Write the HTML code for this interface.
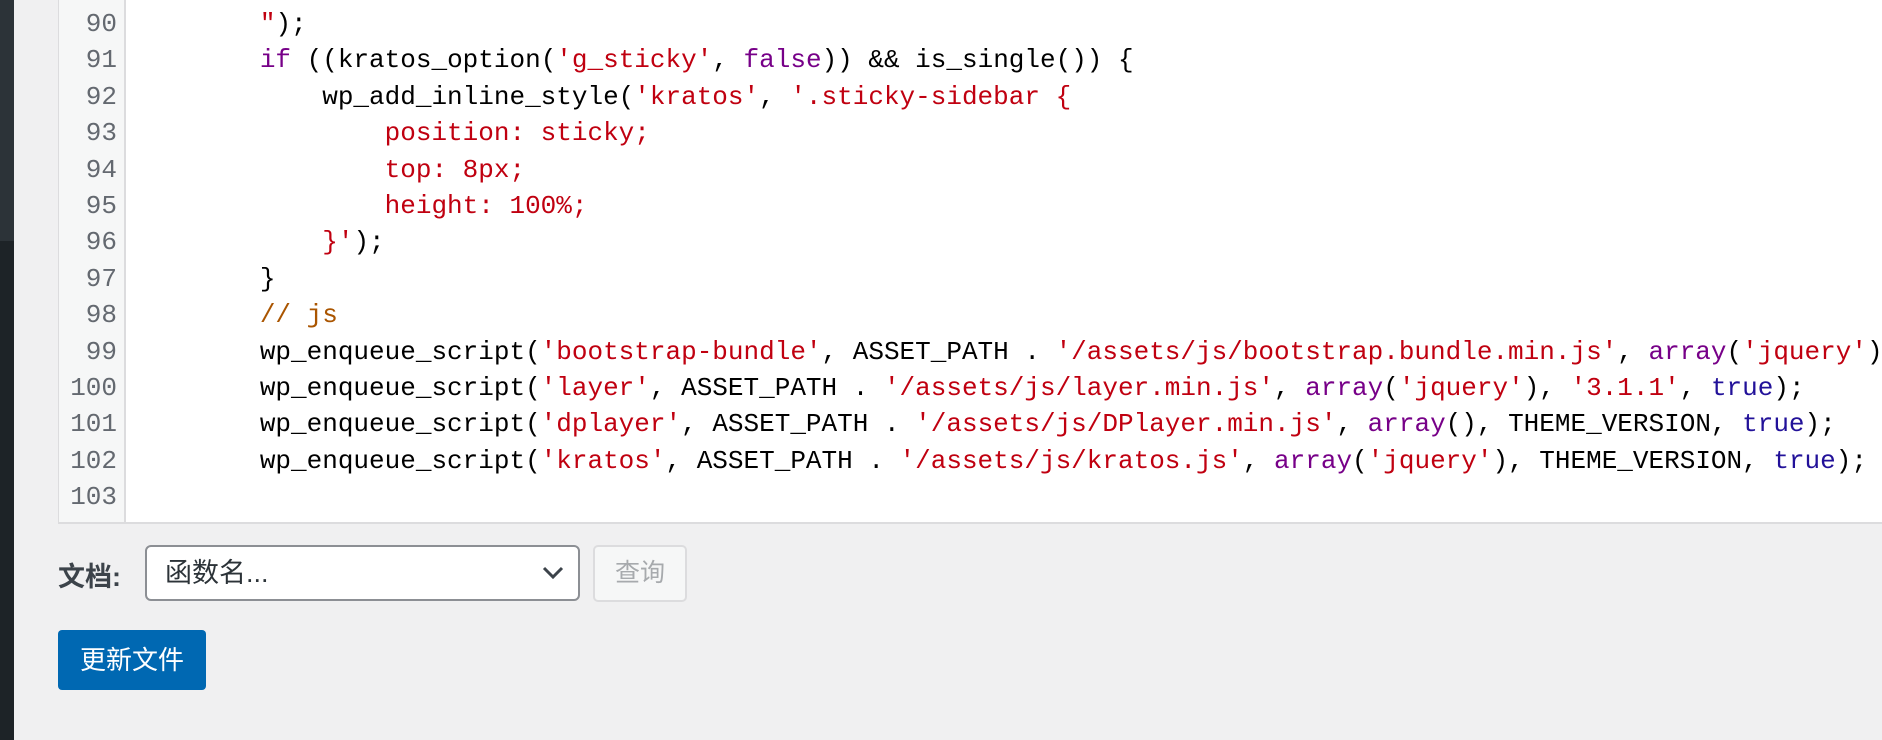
<!DOCTYPE html>
<html><head><meta charset="utf-8"><style>
html,body{margin:0;padding:0;width:1882px;height:740px;overflow:hidden;background:#f0f0f1;position:relative;font-family:"Liberation Sans","Noto Sans CJK SC",sans-serif}
.bar1{position:absolute;left:0;top:0;width:14px;height:241px;background:#2c3338}
.bar2{position:absolute;left:0;top:241px;width:14px;height:499px;background:#1d2327}
.ed{position:absolute;left:58px;top:0;width:1830px;height:522px;background:#fff;border-left:1px solid #dcdcde;border-bottom:2px solid #dcdcde;overflow:hidden}
.gut{position:absolute;left:0;top:0;width:65px;height:522px;background:#f6f7f7;border-right:2px solid #dcdcde}
.ln{position:absolute;left:0;width:58px;text-align:right;color:#646970;font:26px/36.4px "Liberation Mono",monospace}
.cd{position:absolute;left:76px;white-space:pre;color:#000;font:26px/36.4px "Liberation Mono",monospace}
.s{color:#c00010}.k{color:#770088}.t{color:#221199}.c{color:#aa5500}
.lbl{position:absolute;left:58px;top:555px;font-size:27px;font-weight:bold;color:#3c434a}
.sel{position:absolute;left:145px;top:545px;width:435px;height:56px;box-sizing:border-box;background:#fff;border:2px solid #8c8f94;border-radius:6px;font-size:27px;color:#2c3338;padding-left:18px;line-height:52px}
.btn2{position:absolute;left:593px;top:545px;width:94px;height:57px;box-sizing:border-box;background:#f6f7f7;border:2px solid #dcdcde;border-radius:5px;color:#a7aaad;font-size:25px;text-align:center;line-height:53px}
.btn{position:absolute;left:58px;top:630px;width:148px;height:60px;background:#0068b2;border-radius:4px;color:#fff;font-size:26px;text-align:center;line-height:60px}
</style></head><body>
<div class="bar1"></div><div class="bar2"></div>
<div class="ed"><div class="gut"></div>
<div class="ln" style="top:6px">90</div><div class="ln" style="top:42.4px">91</div><div class="ln" style="top:78.8px">92</div><div class="ln" style="top:115.2px">93</div><div class="ln" style="top:151.6px">94</div><div class="ln" style="top:188px">95</div><div class="ln" style="top:224.4px">96</div><div class="ln" style="top:260.8px">97</div><div class="ln" style="top:297.2px">98</div><div class="ln" style="top:333.6px">99</div><div class="ln" style="top:370px">100</div><div class="ln" style="top:406.4px">101</div><div class="ln" style="top:442.8px">102</div><div class="ln" style="top:479.2px">103</div>
<div class="cd" style="top:6px">        <span class="s">"</span>);
        <span class="k">if</span> ((kratos_option(<span class="s">'g_sticky'</span>, <span class="k">false</span>)) &amp;&amp; is_single()) {
            wp_add_inline_style(<span class="s">'kratos'</span>, <span class="s">'.sticky-sidebar {</span>
<span class="s">                position: sticky;</span>
<span class="s">                top: 8px;</span>
<span class="s">                height: 100%;</span>
<span class="s">            }'</span>);
        }
        <span class="c">// js</span>
        wp_enqueue_script(<span class="s">'bootstrap-bundle'</span>, ASSET_PATH . <span class="s">'/assets/js/bootstrap.bundle.min.js'</span>, <span class="k">array</span>(<span class="s">'jquery'</span>), THEME_VERSION, <span class="t">true</span>);
        wp_enqueue_script(<span class="s">'layer'</span>, ASSET_PATH . <span class="s">'/assets/js/layer.min.js'</span>, <span class="k">array</span>(<span class="s">'jquery'</span>), <span class="s">'3.1.1'</span>, <span class="t">true</span>);
        wp_enqueue_script(<span class="s">'dplayer'</span>, ASSET_PATH . <span class="s">'/assets/js/DPlayer.min.js'</span>, <span class="k">array</span>(), THEME_VERSION, <span class="t">true</span>);
        wp_enqueue_script(<span class="s">'kratos'</span>, ASSET_PATH . <span class="s">'/assets/js/kratos.js'</span>, <span class="k">array</span>(<span class="s">'jquery'</span>), THEME_VERSION, <span class="t">true</span>);
</div></div>
<div class="lbl">文档:</div>
<div class="sel">函数名...<svg style="position:absolute;right:14px;top:18px" width="22" height="16" viewBox="0 0 22 16"><path d="M2 3 L11 12 L20 3" fill="none" stroke="#3c434a" stroke-width="3"/></svg></div>
<div class="btn2">查询</div>
<div class="btn">更新文件</div>
</body></html>
